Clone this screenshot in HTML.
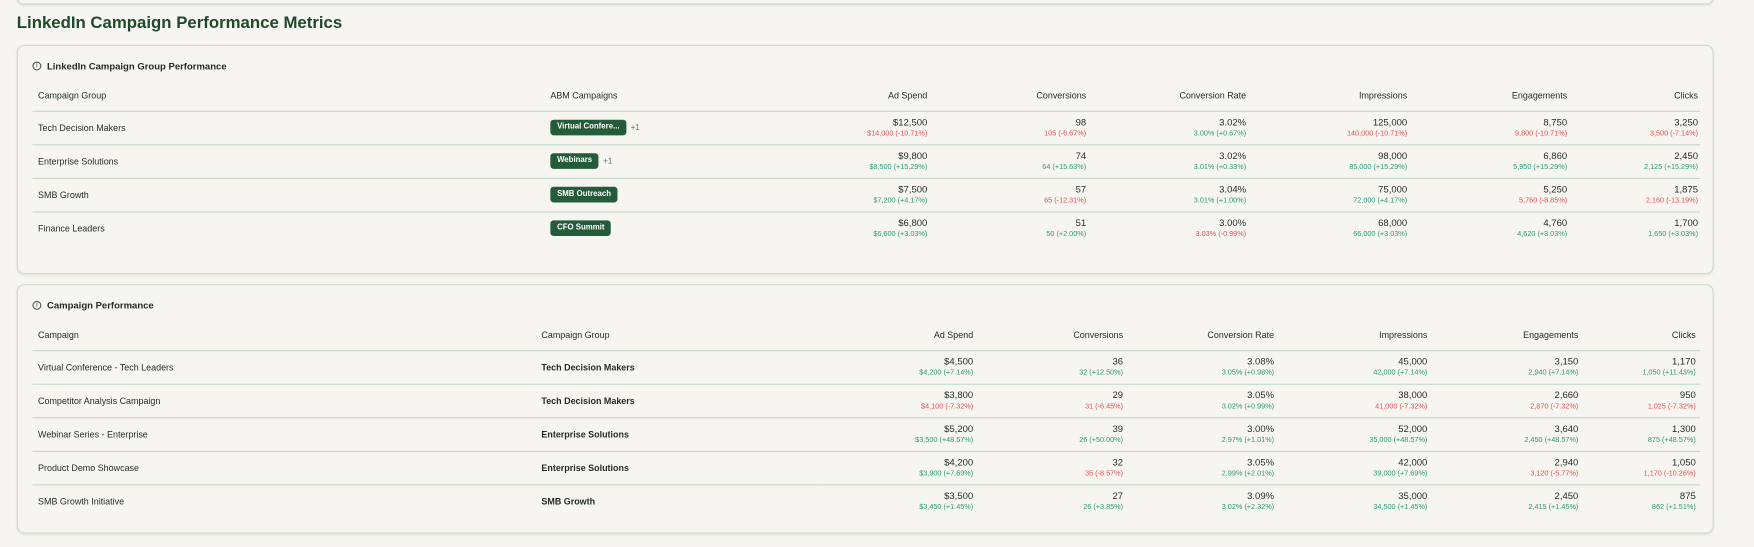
<!DOCTYPE html>
<html><head><meta charset="utf-8"><style>
*{box-sizing:border-box;margin:0;padding:0}
body{width:1754px;height:547px;background:#f7f5f0;font-family:"Liberation Sans",sans-serif;color:#1f2a24;overflow:hidden}
#w{position:relative;width:1568px;height:489px;transform:scale(1.1186);transform-origin:0 0}
.top{position:absolute;left:15px;top:-20px;width:1517px;height:24px;border:1px solid #c9dccd;border-radius:6px;box-shadow:0 1px 2px rgba(0,0,0,.08)}
h1{position:absolute;left:15px;top:12px;font-size:15px;font-weight:bold;color:#1d4a2c}
.card{position:absolute;left:15px;width:1517px;border:1px solid #c9dccd;border-radius:7px;box-shadow:0 1px 2px rgba(0,0,0,.08)}
.ct{position:absolute;left:13px;font-size:8.5px;font-weight:bold;color:#1f2a24;display:flex;align-items:center;gap:5px}
.ic{width:8px;height:8px;border:1px solid #555;border-radius:50%;font-size:6px;line-height:6px;text-align:center;font-weight:normal}
table{position:absolute;left:13px;border-collapse:collapse;table-layout:fixed;font-size:8px}
th{font-weight:normal;height:26px;text-align:right;color:#1f2a24;border-bottom:1px solid #c3d8c9;vertical-align:middle}
th.l,td.l{text-align:left;padding-left:5px}
td{height:30px;text-align:right;border-bottom:1px solid #c3d8c9;vertical-align:middle}
tr:last-child td{border-bottom:none}
.v{font-size:8.5px;line-height:11px}
.s{font-size:6.5px;line-height:9px}
.g{color:#2a9a78}.r{color:#e0505a}
.b{display:inline-block;background:#245c3a;color:#fff;font-size:7px;font-weight:bold;padding:2px 6px;border-radius:3px;line-height:10px;vertical-align:middle}
.p{font-size:7px;color:#666;margin-left:4px;vertical-align:middle}
td.bold{font-weight:bold}
</style></head><body><div id="w">
<div class="top"></div>
<h1>LinkedIn Campaign Performance Metrics</h1>

<div class="card" style="top:40px;height:205px">
<div class="ct" style="top:13px"><span class="ic">i</span>LinkedIn Campaign Group Performance</div>
<table style="top:32px;width:1491px">
<colgroup><col style="width:458px"><col style="width:200px"><col style="width:142px"><col style="width:142px"><col style="width:143px"><col style="width:144px"><col style="width:143px"><col style="width:119px"></colgroup>
<tr><th class="l">Campaign Group</th><th class="l">ABM Campaigns</th><th>Ad Spend</th><th>Conversions</th><th>Conversion Rate</th><th>Impressions</th><th>Engagements</th><th style="padding-right:2px">Clicks</th></tr>
<tr><td class="l">Tech Decision Makers</td><td class="l"><span class="b">Virtual Confere...</span><span class="p">+1</span></td>
<td><div class="v">$12,500</div><div class="s r">$14,000 (-10.71%)</div></td><td><div class="v">98</div><div class="s r">105 (-6.67%)</div></td><td><div class="v">3.02%</div><div class="s g">3.00% (+0.67%)</div></td><td><div class="v">125,000</div><div class="s r">140,000 (-10.71%)</div></td><td><div class="v">8,750</div><div class="s r">9,800 (-10.71%)</div></td><td style="padding-right:2px"><div class="v">3,250</div><div class="s r">3,500 (-7.14%)</div></td></tr>
<tr><td class="l">Enterprise Solutions</td><td class="l"><span class="b">Webinars</span><span class="p">+1</span></td>
<td><div class="v">$9,800</div><div class="s g">$8,500 (+15.29%)</div></td><td><div class="v">74</div><div class="s g">64 (+15.63%)</div></td><td><div class="v">3.02%</div><div class="s g">3.01% (+0.33%)</div></td><td><div class="v">98,000</div><div class="s g">85,000 (+15.29%)</div></td><td><div class="v">6,860</div><div class="s g">5,950 (+15.29%)</div></td><td style="padding-right:2px"><div class="v">2,450</div><div class="s g">2,125 (+15.29%)</div></td></tr>
<tr><td class="l">SMB Growth</td><td class="l"><span class="b">SMB Outreach</span></td>
<td><div class="v">$7,500</div><div class="s g">$7,200 (+4.17%)</div></td><td><div class="v">57</div><div class="s r">65 (-12.31%)</div></td><td><div class="v">3.04%</div><div class="s g">3.01% (+1.00%)</div></td><td><div class="v">75,000</div><div class="s g">72,000 (+4.17%)</div></td><td><div class="v">5,250</div><div class="s r">5,760 (-8.85%)</div></td><td style="padding-right:2px"><div class="v">1,875</div><div class="s r">2,160 (-13.19%)</div></td></tr>
<tr><td class="l">Finance Leaders</td><td class="l"><span class="b">CFO Summit</span></td>
<td><div class="v">$6,800</div><div class="s g">$6,600 (+3.03%)</div></td><td><div class="v">51</div><div class="s g">50 (+2.00%)</div></td><td><div class="v">3.00%</div><div class="s r">3.03% (-0.99%)</div></td><td><div class="v">68,000</div><div class="s g">66,000 (+3.03%)</div></td><td><div class="v">4,760</div><div class="s g">4,620 (+3.03%)</div></td><td style="padding-right:2px"><div class="v">1,700</div><div class="s g">1,650 (+3.03%)</div></td></tr>
</table>
</div>

<div class="card" style="top:254px;height:223px">
<div class="ct" style="top:13px"><span class="ic">i</span>Campaign Performance</div>
<table style="top:32px;width:1491px">
<colgroup><col style="width:450px"><col style="width:252px"><col style="width:139px"><col style="width:134px"><col style="width:135px"><col style="width:137px"><col style="width:135px"><col style="width:109px"></colgroup>
<tr><th class="l">Campaign</th><th class="l">Campaign Group</th><th>Ad Spend</th><th>Conversions</th><th>Conversion Rate</th><th>Impressions</th><th>Engagements</th><th style="padding-right:4px">Clicks</th></tr>
<tr><td class="l">Virtual Conference - Tech Leaders</td><td class="l bold">Tech Decision Makers</td>
<td><div class="v">$4,500</div><div class="s g">$4,200 (+7.14%)</div></td><td><div class="v">36</div><div class="s g">32 (+12.50%)</div></td><td><div class="v">3.08%</div><div class="s g">3.05% (+0.98%)</div></td><td><div class="v">45,000</div><div class="s g">42,000 (+7.14%)</div></td><td><div class="v">3,150</div><div class="s g">2,940 (+7.14%)</div></td><td style="padding-right:4px"><div class="v">1,170</div><div class="s g">1,050 (+11.43%)</div></td></tr>
<tr><td class="l">Competitor Analysis Campaign</td><td class="l bold">Tech Decision Makers</td>
<td><div class="v">$3,800</div><div class="s r">$4,100 (-7.32%)</div></td><td><div class="v">29</div><div class="s r">31 (-6.45%)</div></td><td><div class="v">3.05%</div><div class="s g">3.02% (+0.99%)</div></td><td><div class="v">38,000</div><div class="s r">41,000 (-7.32%)</div></td><td><div class="v">2,660</div><div class="s r">2,870 (-7.32%)</div></td><td style="padding-right:4px"><div class="v">950</div><div class="s r">1,025 (-7.32%)</div></td></tr>
<tr><td class="l">Webinar Series - Enterprise</td><td class="l bold">Enterprise Solutions</td>
<td><div class="v">$5,200</div><div class="s g">$3,500 (+48.57%)</div></td><td><div class="v">39</div><div class="s g">26 (+50.00%)</div></td><td><div class="v">3.00%</div><div class="s g">2.97% (+1.01%)</div></td><td><div class="v">52,000</div><div class="s g">35,000 (+48.57%)</div></td><td><div class="v">3,640</div><div class="s g">2,450 (+48.57%)</div></td><td style="padding-right:4px"><div class="v">1,300</div><div class="s g">875 (+48.57%)</div></td></tr>
<tr><td class="l">Product Demo Showcase</td><td class="l bold">Enterprise Solutions</td>
<td><div class="v">$4,200</div><div class="s g">$3,900 (+7.69%)</div></td><td><div class="v">32</div><div class="s r">35 (-8.57%)</div></td><td><div class="v">3.05%</div><div class="s g">2.99% (+2.01%)</div></td><td><div class="v">42,000</div><div class="s g">39,000 (+7.69%)</div></td><td><div class="v">2,940</div><div class="s r">3,120 (-5.77%)</div></td><td style="padding-right:4px"><div class="v">1,050</div><div class="s r">1,170 (-10.26%)</div></td></tr>
<tr><td class="l">SMB Growth Initiative</td><td class="l bold">SMB Growth</td>
<td><div class="v">$3,500</div><div class="s g">$3,450 (+1.45%)</div></td><td><div class="v">27</div><div class="s g">26 (+3.85%)</div></td><td><div class="v">3.09%</div><div class="s g">3.02% (+2.32%)</div></td><td><div class="v">35,000</div><div class="s g">34,500 (+1.45%)</div></td><td><div class="v">2,450</div><div class="s g">2,415 (+1.45%)</div></td><td style="padding-right:4px"><div class="v">875</div><div class="s g">862 (+1.51%)</div></td></tr>
</table>
</div>
</div></body></html>
